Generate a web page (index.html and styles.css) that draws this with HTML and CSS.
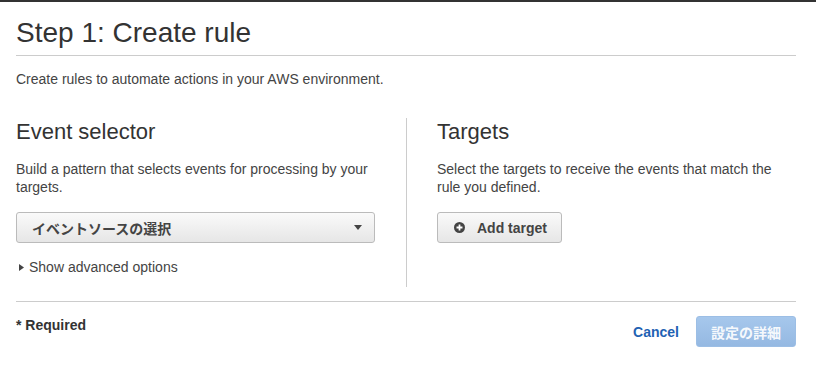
FILE: index.html
```html
<!DOCTYPE html>
<html lang="ja">
<head>
  <meta charset="UTF-8">
  <meta name="viewport" content="width=device-width, initial-scale=1.0">
  <title>Step 1: Create rule</title>
  <link rel="stylesheet" href="styles.css">
</head>
<body>
  <div class="page">
    <h1>Step 1: Create rule</h1>
    <p class="intro">Create rules to automate actions in your AWS environment.</p>

    <div class="columns">
      <div class="col col-left">
        <h2>Event selector</h2>
        <p>Build a pattern that selects events for processing by your targets.</p>
        <button class="dropdown" type="button">
          <span>イベントソースの選択</span>
          <svg class="caret" width="8" height="5" viewBox="0 0 8 5"><path d="M0 0h8L4 5z" fill="#444"/></svg>
        </button>
        <div class="advanced">
          <svg class="arrow" width="5" height="7" viewBox="0 0 5 7"><path d="M0 0l5 3.5L0 7z" fill="#444"/></svg>
          Show advanced options
        </div>
      </div>

      <div class="col col-right">
        <h2>Targets</h2>
        <p>Select the targets to receive the events that match the rule you defined.</p>
        <button class="btn" type="button">
          <svg class="plus" width="11" height="11" viewBox="0 0 10 10">
            <circle cx="5" cy="5" r="5" fill="#444"/>
            <path d="M5 2.3v5.4M2.3 5h5.4" stroke="#fff" stroke-width="1.6"/>
          </svg>
          Add target
        </button>
      </div>
    </div>

    <div class="footer">
      <div class="required">* Required</div>
      <div class="actions">
        <a class="cancel" href="#">Cancel</a>
        <button class="btn-primary" type="button" disabled>設定の詳細</button>
      </div>
    </div>
  </div>
</body>
</html>
```

FILE: styles.css
```css
body {
  margin: 0;
  border-top: 2px solid #333;
  font-family: 'Liberation Sans', 'Noto Sans CJK JP', sans-serif;
  font-size: 14px;
  color: #444;
}
.page {
  padding: 0 20px 0 16px;
}
h1 {
  margin: 15px 0 0;
  padding-bottom: 6px;
  border-bottom: 1px solid #ccc;
  font-size: 28px;
  line-height: 32px;
  font-weight: normal;
  color: #333;
}
p {
  margin: 0;
  line-height: 18px;
}
.intro {
  margin-top: 14px;
}
.columns {
  display: grid;
  grid-template-columns: 1fr 1fr;
  margin-top: 30px;
}
.col {
  padding-bottom: 11px;
}
.col-left {
  padding-right: 31px;
}
.col-right {
  border-left: 1px solid #ccc;
  padding-left: 30px;
  padding-right: 8px;
}
h2 {
  margin: 0 0 14px;
  font-size: 22px;
  line-height: 28px;
  font-weight: normal;
  color: #333;
}
.dropdown, .btn {
  display: flex;
  align-items: center;
  height: 31px;
  margin-top: 16px;
  border: 1px solid #bbb;
  border-radius: 3px;
  background: linear-gradient(#fafafa, #e6e6e6);
  font-family: inherit;
  font-size: 14px;
  font-weight: bold;
  color: #444;
  cursor: pointer;
}
.dropdown {
  width: 100%;
  justify-content: space-between;
  padding: 0 12px 0 15px;
}
.dropdown .caret {
  margin-top: -1px;
}
.btn {
  padding: 0 14px 0 16px;
  gap: 12px;
}
.advanced {
  display: flex;
  align-items: center;
  gap: 5px;
  margin-top: 15px;
  padding-left: 3px;
  line-height: 18px;
}
.footer {
  display: flex;
  justify-content: space-between;
  align-items: flex-start;
  margin-top: 14px;
  padding-top: 14px;
  border-top: 1px solid #ccc;
}
.required {
  font-weight: bold;
  line-height: 18px;
  color: #333;
}
.actions {
  display: flex;
  align-items: center;
  gap: 17px;
}
.cancel {
  font-weight: bold;
  color: #1f62b3;
  text-decoration: none;
}
.btn-primary {
  width: 100px;
  height: 31px;
  border: 1px solid #9cbee5;
  border-radius: 3px;
  background: linear-gradient(#a6c7ec, #95b9e2);
  color: rgba(255, 255, 255, 0.92);
  font-family: inherit;
  font-size: 14px;
  font-weight: bold;
}
```
